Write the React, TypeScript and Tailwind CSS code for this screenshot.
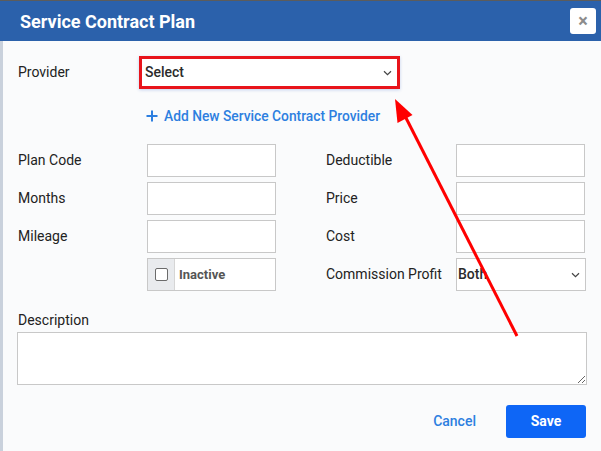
import React from "react";

const Chevron = () => (
  <svg width="9" height="6" viewBox="0 0 9 6" className="shrink-0">
    <path d="M1 1.2 L4.5 4.6 L8 1.2" fill="none" stroke="#444" strokeWidth="1.2" />
  </svg>
);

const Input = () => (
  <div className="h-[33px] w-[129px] border border-[#c8c8c8] bg-white" />
);

export default function App() {
  return (
    <div className="relative h-[451px] w-[601px] overflow-hidden bg-[#fafbfc] font-['Roboto',sans-serif] text-[14px] text-[#222]">
      <div className="h-px bg-[#5c5c5c]" />
      {/* header */}
      <div className="flex h-[40px] items-center justify-between bg-[#2b61ab] pl-[20px] pr-[5px]">
        <span className="text-[18px] font-bold text-white">Service Contract Plan</span>
        <button className="flex h-[26px] w-[26px] items-center justify-center rounded-[3px] bg-white text-[18px] font-bold leading-none text-[#8c8c8c]">
          ×
        </button>
      </div>

      {/* body */}
      <div className="flex h-[410px] flex-col border-l-[3px] border-[#c9d1dc] pl-[15px] pr-[14px] pt-[15px]">
        <div className="flex h-[33px] items-center">
          <span className="w-[121px]">Provider</span>
          <div className="flex h-[33px] w-[261px] items-center justify-between border-[3px] border-[#e8141b] bg-white pl-[3px] pr-[5px] shadow-[0_1px_3px_rgba(40,90,200,0.25)]">
            <span className="font-medium text-[#2b2b2b]">Select</span>
            <Chevron />
          </div>
        </div>

        <div className="ml-[128px] mt-[17px] flex h-[20px] items-center gap-[6px] text-[13.8px] font-medium text-[#2d7fe0]">
          <svg width="12" height="12" viewBox="0 0 12 12">
            <path d="M6 0.5 V11.5 M0.5 6 H11.5" stroke="#2d7fe0" strokeWidth="2" />
          </svg>
          <span>Add New Service Contract Provider</span>
        </div>

        <div className="mt-[18px] grid grid-cols-[129px_179px_130px_130px] gap-y-[5px]">
          <div className="flex h-[33px] items-center">Plan Code</div>
          <Input />
          <div className="flex items-center">Deductible</div>
          <Input />

          <div className="flex h-[33px] items-center">Months</div>
          <Input />
          <div className="flex items-center">Price</div>
          <Input />

          <div className="flex h-[33px] items-center">Mileage</div>
          <Input />
          <div className="flex items-center">Cost</div>
          <Input />

          <div className="h-[33px]" />
          <div className="flex h-[33px] w-[129px] border border-[#c8c8c8] bg-white">
            <div className="flex w-[27px] items-center justify-center border-r border-[#d6d6d6] bg-[#e9ebee]">
              <div className="h-[13px] w-[13px] rounded-[2px] border-[1.5px] border-[#6b6b6b] bg-white" />
            </div>
            <span className="flex items-center pl-[4px] text-[13px] font-bold text-[#555]">Inactive</span>
          </div>
          <div className="flex items-center">Commission Profit</div>
          <div className="flex h-[33px] w-[130px] items-center justify-between border border-[#c8c8c8] bg-white pl-[1px] pr-[5px]">
            <span className="font-medium text-[#2b2b2b]">Both</span>
            <Chevron />
          </div>
        </div>

        <div className="mt-[21px] leading-[17px]">Description</div>
        <textarea className="-ml-px mt-[3px] h-[53px] w-[570px] resize border border-[#c8c8c8] bg-white outline-none" />

        <div className="mt-[20px] flex items-center justify-end gap-[30px] pr-[1px]">
          <button className="text-[14px] font-medium text-[#2d7fe0]">Cancel</button>
          <button className="h-[33px] w-[80px] rounded-[3px] bg-[#0e66f6] text-[14px] font-bold text-white">
            Save
          </button>
        </div>
      </div>

      {/* annotation arrow */}
      <svg className="pointer-events-none absolute left-0 top-0" width="601" height="451">
        <line x1="517" y1="336" x2="404" y2="114" stroke="#ff0000" strokeWidth="3" />
        <polygon points="395,99 397.5,123 412.5,115" fill="#ff0000" />
      </svg>
    </div>
  );
}
